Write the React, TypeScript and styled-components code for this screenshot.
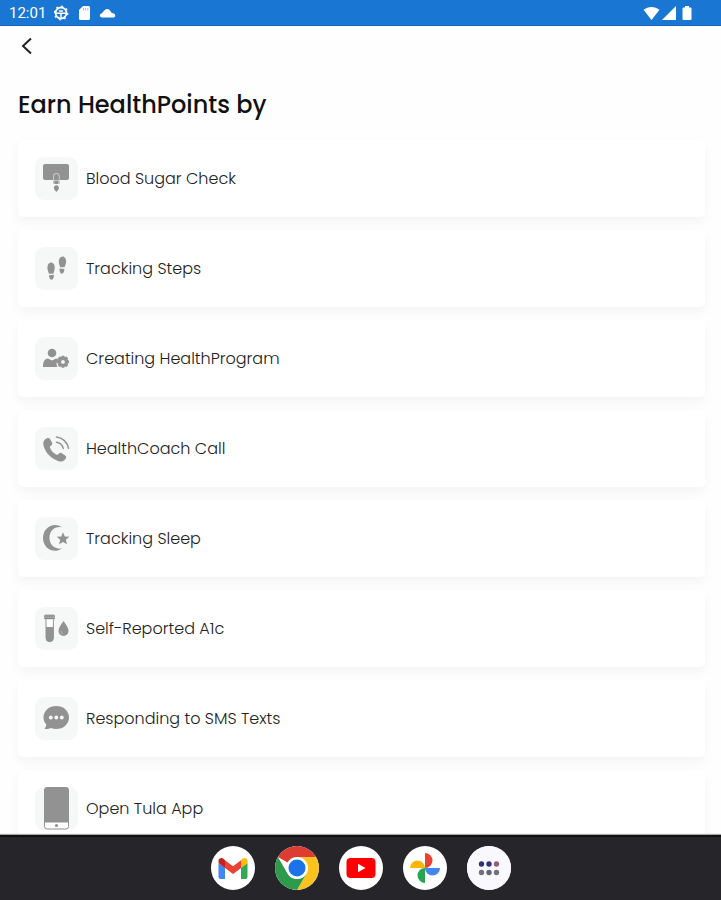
import React from "react";
import styled, { createGlobalStyle } from "styled-components";

const GlobalStyle = createGlobalStyle`
  * { box-sizing: border-box; }
  body { margin: 0; background: #fefefe; font-family: Poppins, Inter, "Open Sans", sans-serif; }
  button { font: inherit; color: inherit; border: 0; padding: 0; background: none; cursor: pointer; }
`;

const Screen = styled.div`
  display: flex;
  flex-direction: column;
  height: 100vh;
  overflow: hidden;
`;

const StatusBar = styled.header`
  display: flex;
  flex: none;
  align-items: center;
  justify-content: space-between;
  height: 26px;
  padding: 0 27px 0 9px;
  background: #1976d2;
  border-bottom: 1px solid #1565b8;
  color: #fff;
`;

const StatusGroup = styled.div<{ $gap: number }>`
  display: flex;
  align-items: center;
  gap: ${(p) => p.$gap}px;
`;

const Clock = styled.time`
  font: 400 15px/20px Roboto, sans-serif;
`;

const Main = styled.main`
  flex: 1;
  min-height: 0;
  overflow: hidden;
  padding: 8px 16px 0 18px;
`;

const BackButton = styled.button`
  display: flex;
  align-items: center;
  height: 24px;
`;

const Title = styled.h1`
  margin: 32px 0 20px;
  font-size: 24px;
  line-height: 30px;
  font-weight: 500;
  color: #111;
`;

const ActivityList = styled.ul`
  display: flex;
  flex-direction: column;
  gap: 13px;
  margin: 0;
  padding: 0;
  list-style: none;
`;

const ActivityCard = styled.button`
  display: flex;
  align-items: center;
  gap: 8px;
  width: 100%;
  height: 77px;
  padding: 0 17px;
  border-radius: 5px;
  background: #fff;
  box-shadow: 0 5px 12px rgba(0, 0, 0, 0.045);
  text-align: left;
`;

const IconTile = styled.span`
  display: flex;
  flex: none;
  width: 43px;
  height: 43px;
  border-radius: 9px;
  background: #f6f8f8;
  color: #929292;
`;

const ActivityName = styled.span`
  font-size: 16px;
  line-height: 24px;
  font-weight: 300;
  color: #222;
`;

const Dock = styled.nav`
  display: flex;
  flex: none;
  align-items: center;
  justify-content: center;
  gap: 20px;
  height: 65px;
  padding-bottom: 2px;
  background: #25252a;
  border-top: 2px solid #101014;
  box-shadow: 0 -1px 1px #aaa;
  z-index: 1;
`;

const DockButton = styled.button`
  display: flex;
  width: 44px;
  height: 44px;
  border-radius: 50%;
  overflow: hidden;
  background: #fff;
`;

const TileSvg = ({ children }: { children: React.ReactNode }) => (
  <svg width="43" height="43" viewBox="0 0 43 43" fill="currentColor" aria-hidden="true">
    {children}
  </svg>
);

const MeterIcon = () => (
  <TileSvg>
    <rect x="8" y="7" width="26" height="16" rx="2" />
    <path d="M18 27V19.500a3.400 3.400 0 0 1 6.800 0V27z" fill="#c9caca" />
    <path d="M19 23v-3.500a2.400 2.400 0 0 1 4.800 0V23z" />
    <path d="M19.300 24h4.200l-.5 3h-3.200z" />
    <path d="M21.400 35c-1.700-1.800-2.500-3-2.500-4.200a2.500 2.500 0 0 1 5 0c0 1.200-.8 2.400-2.500 4.200z" />
  </TileSvg>
);

const StepsIcon = () => (
  <TileSvg>
    <path d="M16 15.500c2.500 0 3.800 2.400 3.700 5.200-.1 2.500-.9 4-1.300 6h-4.500c-.4-1.900-1.500-3.700-1.500-6 0-2.900 1.300-5.200 3.600-5.200z" />
    <path d="M14 28.200l4.800-.4c.3 2.600-.5 5-2.200 5s-2.600-2.400-2.600-4.600z" />
    <path d="M27.500 9.500c2.400 0 3.700 2.400 3.600 5.200-.1 2.400-1.200 4-1.500 5.500h-4.500c-.4-1.800-1.300-3.300-1.300-5.700 0-2.800 1.400-5 3.700-5z" />
    <path d="M24.500 21.600l4.900.5c0 2.400-1 4.700-2.700 4.600-1.600-.1-2.400-2.500-2.200-5.100z" />
  </TileSvg>
);

const ProgramIcon = () => (
  <TileSvg>
    <circle cx="17" cy="16" r="4.300" />
    <path d="M8 30c0-5 1.500-8.500 5-8.500l4 2 4-2c1 .1 1.800.4 2.400.9-2 2-2.400 5-1 7.600z" />
    <path fillRule="evenodd" d="M26.800 18.800h2.400l.5 1.300 1.700-.5 1.700 1.700-.5 1.600 1.400.7v2.400l-1.400.7.5 1.600-1.700 1.700-1.700-.5-.5 1.300h-2.400l-.7-1.300-1.600.5-1.700-1.700.5-1.600-1.300-.7v-2.400l1.300-.7-.5-1.600 1.700-1.700 1.600.5zM28 23a1.900 1.900 0 1 0 0 3.800 1.900 1.900 0 0 0 0-3.800z" />
  </TileSvg>
);

const CallIcon = () => (
  <TileSvg>
    <path d="M12 11.200c1.400-.6 2.500-.2 3.200 1l1.800 3.300c.6 1.200.2 2-.8 2.900l-1.500 1.300c.9 3.500 3.900 6.800 7.500 8.300l1.900-1.500c.9-.8 1.800-.8 2.800-.2l3.200 2.100c1.200.8 1.400 1.900.7 3-1.600 2.700-4.200 3.700-7.200 2.800-7.400-2.100-13.500-8.700-15.100-15.600-.8-3.500.2-6 3.500-7.400z" />
    <path d="M21.500 10c6 .6 11 5.200 12 11.300M21.500 15.200c3.500.6 6 2.900 6.800 6.200" fill="none" stroke="currentColor" strokeWidth="1.500" strokeLinecap="round" />
  </TileSvg>
);

const SleepIcon = () => (
  <TileSvg>
    <path d="M27 10.300C19.500 9 14.500 14 14.500 21s5.500 11.500 12.500 10.500C18 37.500 8 31 8 21S18 4.500 27 10.300z" />
    <path d="M28 15.300l1.800 4.100 4.500.4-3.400 3 1 4.400-3.900-2.300-3.900 2.300 1-4.400-3.400-3 4.500-.4z" />
  </TileSvg>
);

const TestTubeIcon = () => (
  <TileSvg>
    <rect x="9" y="7.500" width="11" height="5" rx="1.500" fill="#a8a8a8" />
    <path d="M9.500 9h10M9.500 11.500h10" stroke="#7d8484" strokeWidth="1" />
    <path d="M11 12.500V31a3.500 3.500 0 0 0 7.400 0V12.500" fill="#fff" stroke="#929292" strokeWidth="1" />
    <path d="M11 20h7.400v11a3.700 3.700 0 0 1-7.400 0z" />
    <path d="M28.500 14c3 4.300 5 7 5 9.900a5 5 0 0 1-10 0c0-2.900 2-5.600 5-9.900z" />
    <path d="M26 24a3 3 0 0 0 2 3" fill="none" stroke="#b8b8b8" />
  </TileSvg>
);

const MessageIcon = () => (
  <TileSvg>
    <path d="M21.300 9c7.200 0 12.700 4.800 12.700 11.500S28.500 32 21.300 32c-2 0-3.800-.4-5.500-1.100-1.700.8-3.800 1.400-6.300 1 .9-1.300 1.800-2.600 1.800-4.300-1.700-1.900-2.800-4.300-2.800-7.100C8.500 13.800 14 9 21.300 9z" />
    <g fill="#f6f8f8">
      <circle cx="15.800" cy="20.500" r="1.900" />
      <circle cx="21.300" cy="20.500" r="1.900" />
      <circle cx="26.800" cy="20.500" r="1.900" />
    </g>
  </TileSvg>
);

const PhoneIcon = () => (
  <TileSvg>
    <rect x="9.500" y=".5" width="24" height="41.500" rx="2.500" fill="#fff" stroke="#929292" />
    <path d="M9.500 3A2.500 2.500 0 0 1 12 .5h19A2.500 2.500 0 0 1 33.500 3v32.500h-24z" />
    <circle cx="21.500" cy="38.500" r="1.600" />
  </TileSvg>
);

const GmailLogo = () => (
  <svg width="44" height="44" viewBox="0 0 44 44" aria-hidden="true">
    <path d="M7.500 17l6.500 4.800V33H9.500a2 2 0 0 1-2-2z" fill="#4285f4" />
    <path d="M30 21.800L36.500 17v14a2 2 0 0 1-2 2H30z" fill="#34a853" />
    <path d="M30 14.200l1.800-1.600c2-1.500 4.700-.1 4.700 2.200V17L30 22z" fill="#fbbc04" />
    <path d="M14 22v-7.800l8 6 8-6V22l-8 6z" fill="#ea4335" />
    <path d="M7.500 17v-2.200c0-2.300 2.700-3.700 4.700-2.200l1.800 1.600V22z" fill="#c5221f" />
  </svg>
);

const ChromeLogo = () => (
  <svg width="44" height="44" viewBox="0 0 44 44" aria-hidden="true">
    <path d="M22 22L2.900 11A22 22 0 0 1 41.100 11z" fill="#dc3c31" />
    <path d="M22 11h19.100A22 22 0 0 1 22 44l9.500-16.500z" fill="#fcc31e" />
    <path d="M2.900 11l9.600 16.500A11 11 0 0 0 31.500 27.500L22 44A22 22 0 0 1 2.900 11z" fill="#2e9a4b" />
    <circle cx="22" cy="22" r="11" fill="#fff" />
    <circle cx="22" cy="22" r="8.500" fill="#1a73e8" />
  </svg>
);

const YoutubeLogo = () => (
  <svg width="44" height="44" viewBox="0 0 44 44" aria-hidden="true">
    <rect x="7.500" y="12" width="29" height="20" rx="4" fill="#f00" />
    <path d="M19 17.700v8.600l7.500-4.300z" fill="#fff" />
  </svg>
);

const PhotosLogo = () => (
  <svg width="44" height="44" viewBox="0 0 44 44" aria-hidden="true">
    <path d="M22 7a7.500 7.500 0 0 1 0 15z" fill="#ea4335" />
    <path d="M37 22a7.500 7.500 0 0 1-15 0z" fill="#4285f4" />
    <path d="M22 37a7.500 7.500 0 0 1 0-15z" fill="#27a550" />
    <path d="M7 22a7.500 7.500 0 0 1 15 0z" fill="#fbb60b" />
  </svg>
);

const AppsLogo = () => (
  <svg width="44" height="44" viewBox="0 0 44 44" aria-hidden="true">
    <rect width="44" height="44" fill="#f9f8ff" />
    <circle cx="14.500" cy="18" r="2.700" fill="#29337e" />
    <circle cx="22" cy="18" r="2.700" fill="#29337e" />
    <circle cx="29.500" cy="18" r="2.700" fill="#906078" />
    <circle cx="14.500" cy="26.500" r="2.700" fill="#70717e" />
    <circle cx="22" cy="26.500" r="2.700" fill="#626574" />
    <circle cx="29.500" cy="26.500" r="2.700" fill="#70717e" />
  </svg>
);

const activities = [
  { name: "Blood Sugar Check", Icon: MeterIcon },
  { name: "Tracking Steps", Icon: StepsIcon },
  { name: "Creating HealthProgram", Icon: ProgramIcon },
  { name: "HealthCoach Call", Icon: CallIcon },
  { name: "Tracking Sleep", Icon: SleepIcon },
  { name: "Self-Reported A1c", Icon: TestTubeIcon },
  { name: "Responding to SMS Texts", Icon: MessageIcon },
  { name: "Open Tula App", Icon: PhoneIcon },
];

const dockApps = [
  { name: "Gmail", Logo: GmailLogo },
  { name: "Chrome", Logo: ChromeLogo },
  { name: "YouTube", Logo: YoutubeLogo },
  { name: "Photos", Logo: PhotosLogo },
  { name: "All apps", Logo: AppsLogo },
];

export default function App() {
  return (
    <Screen>
      <GlobalStyle />
      <StatusBar>
        <StatusGroup $gap={8}>
          <Clock>12:01</Clock>
          <svg width="15" height="16" viewBox="0 0 15 16" fill="none" stroke="#fff" aria-hidden="true">
            <circle cx="7" cy="8" r="5.500" strokeWidth="1.800" />
            <circle cx="7" cy="8" r="6.800" strokeWidth="1.200" strokeDasharray="2 3.340" />
            <path d="M2 8.200h10M7 8.500V13M5 6h4" strokeWidth="1.500" />
          </svg>
          <svg width="14" height="16" viewBox="0 0 14 16" aria-hidden="true">
            <path d="M6 1h5.500A1.500 1.500 0 0 1 13 2.500v11a1.500 1.500 0 0 1-1.500 1.500h-8A1.500 1.500 0 0 1 2 13.500V5z" fill="#fff" />
            <path d="M6.500 3v2.500M8.700 3v2.500M10.900 3v2.500" stroke="#bcaedb" />
          </svg>
          <svg width="17" height="16" viewBox="0 0 17 16" fill="#fff" aria-hidden="true">
            <path d="M3 12.500c-2.800 0-3-3.700 0-4.300C4.500 6.500 6 4 8 4c2.500 0 3.500 2 4.500 3.800 4.500.4 5 4.700 1.500 4.700z" />
          </svg>
        </StatusGroup>
        <StatusGroup $gap={2}>
          <svg width="17" height="16" viewBox="0 0 17 16" fill="#fff" aria-hidden="true">
            <path d="M8.500 15L.5 4.800C5 .9 12 .9 16.500 4.800z" />
          </svg>
          <svg width="14" height="16" viewBox="0 0 14 16" fill="#fff" aria-hidden="true">
            <path d="M14 1v14H0z" />
          </svg>
          <svg width="16" height="16" viewBox="0 0 16 16" fill="#fff" aria-hidden="true">
            <path d="M7 1h4v1.500h1.500a1 1 0 0 1 1 1V14a1 1 0 0 1-1 1h-7a1 1 0 0 1-1-1V3.500a1 1 0 0 1 1-1H7z" />
          </svg>
        </StatusGroup>
      </StatusBar>
      <Main>
        <BackButton type="button" aria-label="Back">
          <svg width="18" height="24" viewBox="0 0 18 24" fill="none" stroke="#222" strokeWidth="2" aria-hidden="true">
            <path d="M13 4.500L5 12l8 7.500" />
          </svg>
        </BackButton>
        <Title>Earn HealthPoints by</Title>
        <ActivityList>
          {activities.map(({ name, Icon }) => (
            <li key={name}>
              <ActivityCard type="button">
                <IconTile><Icon /></IconTile>
                <ActivityName>{name}</ActivityName>
              </ActivityCard>
            </li>
          ))}
        </ActivityList>
      </Main>
      <Dock aria-label="Apps">
        {dockApps.map(({ name, Logo }) => (
          <DockButton key={name} type="button" aria-label={name}><Logo /></DockButton>
        ))}
      </Dock>
    </Screen>
  );
}
